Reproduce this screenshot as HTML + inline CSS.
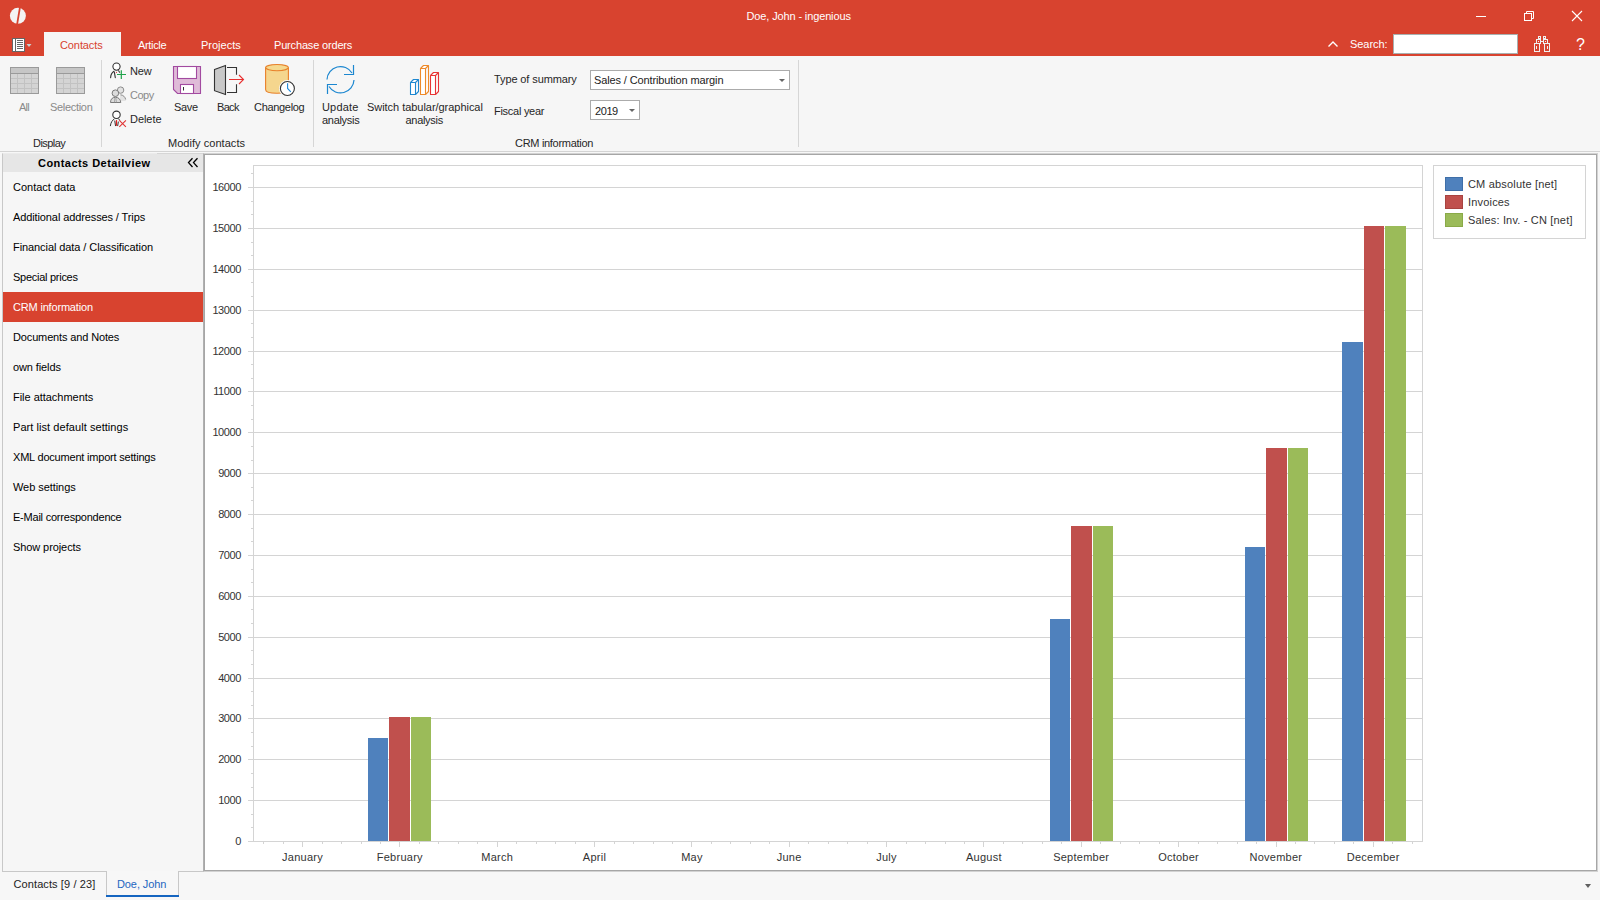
<!DOCTYPE html>
<html><head><meta charset="utf-8">
<style>
*{margin:0;padding:0;box-sizing:border-box}
html,body{width:1600px;height:900px;overflow:hidden;background:#F7F7F7;font-family:"Liberation Sans",sans-serif;font-size:11px;color:#333}
.a{position:absolute;white-space:nowrap;line-height:13px;letter-spacing:-0.1px}
#title{position:absolute;left:0;top:0;width:1600px;height:56px;background:#D8432F}
.w{color:#fff}
#ribbon{position:absolute;left:0;top:56px;width:1600px;height:95px;background:#F6F6F6}
.sep{position:absolute;width:1px;background:#D6D6D6}
.g{color:#8A8A8A}
.d{color:#262626}
.yl{left:199px;width:42px;text-align:right;color:#333;letter-spacing:-0.4px}
.xl{width:120px;text-align:center;color:#333;letter-spacing:0.25px}
.cl{color:#333;letter-spacing:0.18px}
</style></head><body>
<div id="title">
  <!-- logo -->
  <svg class="a" style="left:9px;top:7px" width="18" height="18" viewBox="0 0 18 18">
    <circle cx="8.9" cy="8.85" r="8" fill="#F4F4F4"/>
    <path d="M10.1 0 L11.9 0 L8.9 18 L7.1 18 Z" fill="#D8432F"/>
  </svg>
  <div class="a w" style="left:746.5px;top:10px;letter-spacing:-0.13px">Doe, John - ingenious</div>
  <!-- window buttons -->
  <div class="a" style="left:1476px;top:16px;width:10px;height:1px;background:#fff"></div>
  <svg class="a" style="left:1523px;top:10px" width="12" height="12" viewBox="0 0 12 12">
    <rect x="1.5" y="3.5" width="7" height="7" fill="none" stroke="#fff"/>
    <path d="M3.5 3.5 V1.5 H10.5 V8.5 H8.5" fill="none" stroke="#fff"/>
  </svg>
  <svg class="a" style="left:1571px;top:10px" width="12" height="12" viewBox="0 0 12 12">
    <path d="M1 1 L11 11 M11 1 L1 11" stroke="#fff" stroke-width="1.1"/>
  </svg>
  <!-- app menu -->
  <svg class="a" style="left:12px;top:38px" width="22" height="15" viewBox="0 0 22 15">
    <rect x="0.5" y="0.5" width="12" height="13" fill="#fff" stroke="#666"/>
    <rect x="0.5" y="0.5" width="3" height="13" fill="#fff" stroke="#666"/>
    <path d="M5 2.5H11M5 4.5H11M5 6.5H11M5 8.5H11M5 10.5H11" stroke="#666"/>
    <path d="M14.5 6 L19.5 6 L17 9 Z" fill="#C8D0D0"/>
  </svg>
  <!-- tabs -->
  <div class="a" style="left:44px;top:32px;width:77px;height:24px;background:#F6F6F6"></div>
  <div class="a" style="left:60px;top:39px;color:#D8432F;letter-spacing:-0.1px">Contacts</div>
  <div class="a w" style="left:138px;top:39px;letter-spacing:-0.33px">Article</div>
  <div class="a w" style="left:201px;top:39px;letter-spacing:0px">Projects</div>
  <div class="a w" style="left:274px;top:39px;letter-spacing:-0.17px">Purchase orders</div>
  <!-- search -->
  <svg class="a" style="left:1327px;top:40px" width="12" height="9" viewBox="0 0 12 9">
    <path d="M1.5 6.5 L6 2 L10.5 6.5" fill="none" stroke="#fff" stroke-width="1.4"/>
  </svg>
  <div class="a w" style="left:1350px;top:38px;letter-spacing:-0.05px">Search:</div>
  <div class="a" style="left:1393px;top:34px;width:125px;height:20px;background:#fff;border:1px solid #A8B0B0"></div>
  <svg class="a" style="left:1533px;top:35px" width="18" height="18" viewBox="0 0 18 18" shape-rendering="crispEdges">
    <path d="M5.5 1.5H7.5V3.5H5.5Z M3.5 4.5H7.5V8.5H3.5Z M1.5 8.5H6.5V16.5H1.5Z M10.5 1.5H12.5V3.5H10.5Z M10.5 4.5H14.5V8.5H10.5Z M11.5 8.5H16.5V16.5H11.5Z" fill="none" stroke="#F0F0F0"/>
    <path d="M7.5 6.5H10.5 M5.5 6V7 M12.5 6V7 M3.5 11V14 M14.5 11V14" stroke="#F0F0F0"/>
  </svg>
  <div class="a w" style="left:1576px;top:36px;font-size:16px;line-height:18px">?</div>
</div>

<div id="ribbon"></div>
<div class="a" style="left:0;top:151px;width:1600px;height:1px;background:#D4D4D4"></div>
<!-- Display group -->
<svg class="a" style="left:10px;top:67px" width="30" height="28" viewBox="0 0 30 28">
  <rect x="0.5" y="0.5" width="28" height="26" fill="#D4D4D4" stroke="#9A9A9A"/>
  <rect x="1" y="1" width="27" height="5" fill="#C6C6C6"/>
  <path d="M1 6.5H28" stroke="#9A9A9A"/>
  <path d="M1 11.5H28M1 16.5H28M1 21.5H28M7.5 7V26M14.5 7V26M21.5 7V26" stroke="#C2C2C2"/>
</svg>
<svg class="a" style="left:56px;top:67px" width="30" height="28" viewBox="0 0 30 28">
  <rect x="0.5" y="0.5" width="28" height="26" fill="#D4D4D4" stroke="#9A9A9A"/>
  <rect x="1" y="1" width="27" height="5" fill="#C6C6C6"/>
  <path d="M1 6.5H28" stroke="#9A9A9A"/>
  <path d="M1 11.5H28M1 16.5H28M1 21.5H28M7.5 7V26M14.5 7V26M21.5 7V26" stroke="#C2C2C2"/>
</svg>
<div class="a g" style="left:19px;top:101px;letter-spacing:-0.75px">All</div>
<div class="a g" style="left:50px;top:101px;letter-spacing:-0.31px">Selection</div>
<div class="a d" style="left:33px;top:137px;letter-spacing:-0.55px">Display</div>
<div class="sep" style="left:101px;top:60px;height:87px"></div>
<!-- Modify contacts -->
<svg class="a" style="left:109px;top:62px" width="18" height="18" viewBox="0 0 18 18">
  <circle cx="7.5" cy="4.6" r="3.6" fill="#fff" stroke="#333" stroke-width="1.1"/>
  <path d="M1.6 15.6 C1.8 12.5 3 10.5 5 9.3 M5.4 10.3 L6.3 15.6 M9.6 8.8 L10.6 10.2" fill="none" stroke="#333" stroke-width="1.1" stroke-linecap="round"/>
  <circle cx="7.5" cy="10.3" r="0.6" fill="#E03030"/>
  <path d="M12.3 8.2V17M8 12.5H17" stroke="#1FA24A" stroke-width="1.2"/>
</svg>
<svg class="a" style="left:109px;top:86px" width="18" height="18" viewBox="0 0 18 18">
  <path d="M11 8.5 C14 8.5 16.3 10.5 16.7 13.5 L16.7 15 H11 Z" fill="#E2E2E2"/>
  <path d="M11.5 8.8 C14.2 9 16.2 11 16.7 13.5" fill="none" stroke="#8C8C8C"/>
  <circle cx="11.6" cy="4.1" r="3.2" fill="#E2E2E2" stroke="#8C8C8C"/>
  <circle cx="6.4" cy="7.2" r="3.3" fill="#DCDCDC" stroke="#7A7A7A"/>
  <path d="M1.5 16.5 C1.5 13 3.5 11.3 6.4 11.3 C9.3 11.3 11.5 13 11.8 16.5 Z" fill="#DCDCDC" stroke="#7A7A7A"/>
  <path d="M5.9 12 L5.4 16.3 M6.9 12 L7.4 16.3" stroke="#9A9A9A" stroke-width="0.8"/>
</svg>
<svg class="a" style="left:109px;top:110px" width="18" height="18" viewBox="0 0 18 18">
  <circle cx="7.5" cy="4.8" r="3.7" fill="#fff" stroke="#333" stroke-width="1.1"/>
  <path d="M1.4 15.7 C1.8 12.5 3.2 10.3 5 9.2 M5.8 11 L6.5 15.7 M9.3 12 L8.7 15.7 M9.8 9 L10.6 10.2" fill="none" stroke="#333" stroke-width="1" stroke-linecap="round"/>
  <path d="M7.5 10.1 V15.8" stroke="#E02020" stroke-width="1.2"/>
  <path d="M10.3 10.4 L16.9 16.8 M16.9 10.4 L10.3 16.8" stroke="#E03535" stroke-width="1.1"/>
</svg>
<div class="a d" style="left:130px;top:65px;letter-spacing:-0.15px">New</div>
<div class="a g" style="left:130px;top:89px;letter-spacing:-0.5px">Copy</div>
<div class="a d" style="left:130px;top:113px;letter-spacing:-0.06px">Delete</div>
<!-- Save -->
<svg class="a" style="left:172px;top:65px" width="30" height="30" viewBox="0 0 30 30">
  <path d="M1.5 1.5 H28.5 V28.5 H5.5 L1.5 24.5 Z" fill="#DFBBD8" stroke="#A24AA0" stroke-width="1.1"/>
  <rect x="5.5" y="1.5" width="19" height="12" fill="#fff" stroke="#A24AA0" stroke-width="1.1"/>
  <rect x="8.5" y="19.5" width="13" height="9" fill="#fff" stroke="#A24AA0" stroke-width="1.1"/>
  <path d="M11.5 22V25.5" stroke="#333"/>
</svg>
<!-- Back -->
<svg class="a" style="left:213px;top:64px" width="32" height="32" viewBox="0 0 32 32">
  <path d="M1.5 5.4 L12.5 1.5 V30.5 L1.5 26.7 Z" fill="#C8C8C8" stroke="#333" stroke-width="1.1"/>
  <path d="M14 3.5 H23.5 V10.7 M23.5 20.2 V28.5 H14" fill="none" stroke="#333" stroke-width="1.1"/>
  <path d="M16 15.5 H30.5 M26 11 L30.5 15.5 L26 20" fill="none" stroke="#E83030" stroke-width="1.1"/>
</svg>
<!-- Changelog -->
<svg class="a" style="left:264px;top:63px" width="34" height="34" viewBox="0 0 34 34">
  <path d="M1.6 4.6 V26.5 C1.6 28.8 6.5 30.3 13 30.3 C19.5 30.3 24.4 28.8 24.4 26.5 V4.6" fill="#F5D68E" stroke="#E8802A" stroke-width="1.1"/>
  <ellipse cx="13" cy="4.6" rx="11.4" ry="3.1" fill="#F5D98F" stroke="#E8802A" stroke-width="1.1"/>
  <circle cx="23.4" cy="25.5" r="8.4" fill="#F8F8F8"/>
  <circle cx="23.4" cy="25.5" r="7" fill="#fff" stroke="#333" stroke-width="1.1"/>
  <path d="M23.6 20.2 V25.5 L26.8 28.8" fill="none" stroke="#1E88D8" stroke-width="1.1"/>
</svg>
<div class="a d" style="left:174px;top:101px;letter-spacing:-0.33px">Save</div>
<div class="a d" style="left:217px;top:101px;letter-spacing:-0.67px">Back</div>
<div class="a d" style="left:254px;top:101px;letter-spacing:-0.31px">Changelog</div>
<div class="a d" style="left:168px;top:137px;letter-spacing:0.04px">Modify contacts</div>
<div class="sep" style="left:313px;top:60px;height:87px"></div>
<!-- Update analysis -->
<svg class="a" style="left:324px;top:63px" width="34" height="34" viewBox="0 0 34 34">
  <path d="M3 16.5 A13.5 13.5 0 0 1 28 10" fill="none" stroke="#1C87D0" stroke-width="1.2"/>
  <path d="M29.5 2 V11.5 H20" fill="none" stroke="#1C87D0" stroke-width="1.2"/>
  <path d="M30 17 A13.5 13.5 0 0 1 5 23.5" fill="none" stroke="#1C87D0" stroke-width="1.2"/>
  <path d="M3.5 31 V21.5 H13" fill="none" stroke="#1C87D0" stroke-width="1.2"/>
</svg>
<!-- Switch -->
<svg class="a" style="left:408px;top:63px" width="34" height="34" viewBox="0 0 34 34">
  <path d="M2.5 19.5 H7.5 V31.5 H2.5 Z M2.5 19.5 L5.5 16.5 H10.5 L7.5 19.5 M10.5 16.5 V28.5 L7.5 31.5" fill="#fff" stroke="#1C87D0" stroke-width="1.1" stroke-linejoin="round"/>
  <path d="M12.5 5.5 H17.5 V31.5 H12.5 Z M12.5 5.5 L15.5 2.5 H20.5 L17.5 5.5 M20.5 2.5 V28.5 L17.5 31.5" fill="#fff" stroke="#EE8A2A" stroke-width="1.1" stroke-linejoin="round"/>
  <path d="M22.5 12.5 H27.5 V31.5 H22.5 Z M22.5 12.5 L25.5 9.5 H30.5 L27.5 12.5 M30.5 9.5 V28.5 L27.5 31.5" fill="#fff" stroke="#E83535" stroke-width="1.1" stroke-linejoin="round"/>
</svg>
<div class="a d" style="left:322px;top:101px;letter-spacing:0.18px">Update</div>
<div class="a d" style="left:322px;top:114px;letter-spacing:-0.3px">analysis</div>
<div class="a d" style="left:367px;top:101px;letter-spacing:-0.04px">Switch tabular/graphical</div>
<div class="a d" style="left:405.5px;top:114px;letter-spacing:-0.3px">analysis</div>
<div class="a d" style="left:494px;top:73px;letter-spacing:-0.11px">Type of summary</div>
<div class="a" style="left:590px;top:70px;width:200px;height:20px;background:#fff;border:1px solid #ABABAB"></div>
<div class="a" style="left:594px;top:74px;color:#222;letter-spacing:-0.12px">Sales / Contribution margin</div>
<div class="a" style="left:779px;top:79px;width:0;height:0;border-left:3px solid transparent;border-right:3px solid transparent;border-top:3px solid #666"></div>
<div class="a d" style="left:494px;top:105px;letter-spacing:-0.27px">Fiscal year</div>
<div class="a" style="left:590px;top:100px;width:50px;height:20px;background:#fff;border:1px solid #ABABAB"></div>
<div class="a" style="left:595px;top:105px;color:#222;letter-spacing:-0.43px">2019</div>
<div class="a" style="left:629px;top:109px;width:0;height:0;border-left:3px solid transparent;border-right:3px solid transparent;border-top:3px solid #666"></div>
<div class="a d" style="left:515px;top:137px;letter-spacing:-0.3px">CRM information</div>
<div class="sep" style="left:798px;top:60px;height:87px"></div>
<!--NAV-->
<div class="a" style="left:2px;top:153px;width:202px;height:719px;border:1px solid #C8C8C8;border-top-color:#EBEBEB;border-right:none;background:#F6F6F6"></div>
<div class="a" style="left:157px;top:153px;width:46px;height:1px;background:#D6D6D6"></div>
<div class="a" style="left:3px;top:154px;width:200px;height:18px;background:#E6E6E6"></div>
<div class="a" style="left:38px;top:157px;font-weight:bold;color:#000;letter-spacing:0.45px">Contacts Detailview</div>
<svg class="a" style="left:187px;top:157px" width="12" height="11" viewBox="0 0 12 11"><path d="M5.5 1.2 L1.5 5.6 L5.5 10 M10.5 1.2 L6.5 5.6 L10.5 10" fill="none" stroke="#000" stroke-width="1.3"/></svg>
<div class="a" style="left:3px;top:292px;width:200px;height:30px;background:#D8432F"></div>
<div class="a" style="left:13px;top:181px;color:#000;letter-spacing:0px">Contact data</div>
<div class="a" style="left:13px;top:211px;color:#000;letter-spacing:-0.11px">Additional addresses / Trips</div>
<div class="a" style="left:13px;top:241px;color:#000;letter-spacing:-0.08px">Financial data / Classification</div>
<div class="a" style="left:13px;top:271px;color:#000;letter-spacing:-0.27px">Special prices</div>
<div class="a" style="left:13px;top:301px;color:#fff;letter-spacing:-0.18px">CRM information</div>
<div class="a" style="left:13px;top:331px;color:#000;letter-spacing:-0.14px">Documents and Notes</div>
<div class="a" style="left:13px;top:361px;color:#000;letter-spacing:-0.11px">own fields</div>
<div class="a" style="left:13px;top:391px;color:#000;letter-spacing:-0.03px">File attachments</div>
<div class="a" style="left:13px;top:421px;color:#000;letter-spacing:0.06px">Part list default settings</div>
<div class="a" style="left:13px;top:451px;color:#000;letter-spacing:-0.2px">XML document import settings</div>
<div class="a" style="left:13px;top:481px;color:#000;letter-spacing:-0.06px">Web settings</div>
<div class="a" style="left:13px;top:511px;color:#000;letter-spacing:-0.22px">E-Mail correspondence</div>
<div class="a" style="left:13px;top:541px;color:#000;letter-spacing:-0.09px">Show projects</div>
<div class="a" style="left:203px;top:153px;width:1395px;height:719px;background:#fff;border:1px solid #D2D2D2;border-left-color:#B0B0B0"><div style="position:absolute;left:0;top:0;right:0;bottom:0;border:1px solid #A6A6A6"></div></div>
<svg class="a" style="left:0;top:0" width="1600" height="900" viewBox="0 0 1600 900">


















































<rect x="248" y="841" width="1175" height="1" fill="#D4D4D4"/><rect x="251" y="827" width="2" height="1" fill="#D4D4D4"/><rect x="251" y="814" width="2" height="1" fill="#D4D4D4"/><rect x="248" y="800" width="1175" height="1" fill="#D4D4D4"/><rect x="251" y="787" width="2" height="1" fill="#D4D4D4"/><rect x="251" y="773" width="2" height="1" fill="#D4D4D4"/><rect x="248" y="759" width="1175" height="1" fill="#D4D4D4"/><rect x="251" y="746" width="2" height="1" fill="#D4D4D4"/><rect x="251" y="732" width="2" height="1" fill="#D4D4D4"/><rect x="248" y="718" width="1175" height="1" fill="#D4D4D4"/><rect x="251" y="705" width="2" height="1" fill="#D4D4D4"/><rect x="251" y="691" width="2" height="1" fill="#D4D4D4"/><rect x="248" y="678" width="1175" height="1" fill="#D4D4D4"/><rect x="251" y="664" width="2" height="1" fill="#D4D4D4"/><rect x="251" y="650" width="2" height="1" fill="#D4D4D4"/><rect x="248" y="637" width="1175" height="1" fill="#D4D4D4"/><rect x="251" y="623" width="2" height="1" fill="#D4D4D4"/><rect x="251" y="609" width="2" height="1" fill="#D4D4D4"/><rect x="248" y="596" width="1175" height="1" fill="#D4D4D4"/><rect x="251" y="582" width="2" height="1" fill="#D4D4D4"/><rect x="251" y="569" width="2" height="1" fill="#D4D4D4"/><rect x="248" y="555" width="1175" height="1" fill="#D4D4D4"/><rect x="251" y="541" width="2" height="1" fill="#D4D4D4"/><rect x="251" y="528" width="2" height="1" fill="#D4D4D4"/><rect x="248" y="514" width="1175" height="1" fill="#D4D4D4"/><rect x="251" y="500" width="2" height="1" fill="#D4D4D4"/><rect x="251" y="487" width="2" height="1" fill="#D4D4D4"/><rect x="248" y="473" width="1175" height="1" fill="#D4D4D4"/><rect x="251" y="460" width="2" height="1" fill="#D4D4D4"/><rect x="251" y="446" width="2" height="1" fill="#D4D4D4"/><rect x="248" y="432" width="1175" height="1" fill="#D4D4D4"/><rect x="251" y="419" width="2" height="1" fill="#D4D4D4"/><rect x="251" y="405" width="2" height="1" fill="#D4D4D4"/><rect x="248" y="391" width="1175" height="1" fill="#D4D4D4"/><rect x="251" y="378" width="2" height="1" fill="#D4D4D4"/><rect x="251" y="364" width="2" height="1" fill="#D4D4D4"/><rect x="248" y="351" width="1175" height="1" fill="#D4D4D4"/><rect x="251" y="337" width="2" height="1" fill="#D4D4D4"/><rect x="251" y="323" width="2" height="1" fill="#D4D4D4"/><rect x="248" y="310" width="1175" height="1" fill="#D4D4D4"/><rect x="251" y="296" width="2" height="1" fill="#D4D4D4"/><rect x="251" y="282" width="2" height="1" fill="#D4D4D4"/><rect x="248" y="269" width="1175" height="1" fill="#D4D4D4"/><rect x="251" y="255" width="2" height="1" fill="#D4D4D4"/><rect x="251" y="242" width="2" height="1" fill="#D4D4D4"/><rect x="248" y="228" width="1175" height="1" fill="#D4D4D4"/><rect x="251" y="214" width="2" height="1" fill="#D4D4D4"/><rect x="251" y="201" width="2" height="1" fill="#D4D4D4"/><rect x="248" y="187" width="1175" height="1" fill="#D4D4D4"/><rect x="251" y="173" width="2" height="1" fill="#D4D4D4"/><rect x="253" y="165" width="1170" height="1" fill="#D4D4D4"/>
<rect x="253" y="165" width="1" height="677" fill="#D4D4D4"/>
<rect x="1422" y="165" width="1" height="677" fill="#D4D4D4"/><rect x="263" y="842" width="1" height="2" fill="#D4D4D4"/><rect x="283" y="842" width="1" height="2" fill="#D4D4D4"/><rect x="302" y="842" width="1" height="5" fill="#D4D4D4"/><rect x="322" y="842" width="1" height="2" fill="#D4D4D4"/><rect x="341" y="842" width="1" height="2" fill="#D4D4D4"/><rect x="361" y="842" width="1" height="2" fill="#D4D4D4"/><rect x="380" y="842" width="1" height="2" fill="#D4D4D4"/><rect x="399" y="842" width="1" height="5" fill="#D4D4D4"/><rect x="419" y="842" width="1" height="2" fill="#D4D4D4"/><rect x="438" y="842" width="1" height="2" fill="#D4D4D4"/><rect x="458" y="842" width="1" height="2" fill="#D4D4D4"/><rect x="477" y="842" width="1" height="2" fill="#D4D4D4"/><rect x="497" y="842" width="1" height="5" fill="#D4D4D4"/><rect x="516" y="842" width="1" height="2" fill="#D4D4D4"/><rect x="536" y="842" width="1" height="2" fill="#D4D4D4"/><rect x="555" y="842" width="1" height="2" fill="#D4D4D4"/><rect x="575" y="842" width="1" height="2" fill="#D4D4D4"/><rect x="594" y="842" width="1" height="5" fill="#D4D4D4"/><rect x="614" y="842" width="1" height="2" fill="#D4D4D4"/><rect x="633" y="842" width="1" height="2" fill="#D4D4D4"/><rect x="653" y="842" width="1" height="2" fill="#D4D4D4"/><rect x="672" y="842" width="1" height="2" fill="#D4D4D4"/><rect x="691" y="842" width="1" height="5" fill="#D4D4D4"/><rect x="711" y="842" width="1" height="2" fill="#D4D4D4"/><rect x="730" y="842" width="1" height="2" fill="#D4D4D4"/><rect x="750" y="842" width="1" height="2" fill="#D4D4D4"/><rect x="769" y="842" width="1" height="2" fill="#D4D4D4"/><rect x="789" y="842" width="1" height="5" fill="#D4D4D4"/><rect x="808" y="842" width="1" height="2" fill="#D4D4D4"/><rect x="828" y="842" width="1" height="2" fill="#D4D4D4"/><rect x="847" y="842" width="1" height="2" fill="#D4D4D4"/><rect x="867" y="842" width="1" height="2" fill="#D4D4D4"/><rect x="886" y="842" width="1" height="5" fill="#D4D4D4"/><rect x="906" y="842" width="1" height="2" fill="#D4D4D4"/><rect x="925" y="842" width="1" height="2" fill="#D4D4D4"/><rect x="945" y="842" width="1" height="2" fill="#D4D4D4"/><rect x="964" y="842" width="1" height="2" fill="#D4D4D4"/><rect x="983" y="842" width="1" height="5" fill="#D4D4D4"/><rect x="1003" y="842" width="1" height="2" fill="#D4D4D4"/><rect x="1022" y="842" width="1" height="2" fill="#D4D4D4"/><rect x="1042" y="842" width="1" height="2" fill="#D4D4D4"/><rect x="1061" y="842" width="1" height="2" fill="#D4D4D4"/><rect x="1081" y="842" width="1" height="5" fill="#D4D4D4"/><rect x="1100" y="842" width="1" height="2" fill="#D4D4D4"/><rect x="1120" y="842" width="1" height="2" fill="#D4D4D4"/><rect x="1139" y="842" width="1" height="2" fill="#D4D4D4"/><rect x="1159" y="842" width="1" height="2" fill="#D4D4D4"/><rect x="1178" y="842" width="1" height="5" fill="#D4D4D4"/><rect x="1198" y="842" width="1" height="2" fill="#D4D4D4"/><rect x="1217" y="842" width="1" height="2" fill="#D4D4D4"/><rect x="1237" y="842" width="1" height="2" fill="#D4D4D4"/><rect x="1256" y="842" width="1" height="2" fill="#D4D4D4"/><rect x="1276" y="842" width="1" height="5" fill="#D4D4D4"/><rect x="1295" y="842" width="1" height="2" fill="#D4D4D4"/><rect x="1314" y="842" width="1" height="2" fill="#D4D4D4"/><rect x="1334" y="842" width="1" height="2" fill="#D4D4D4"/><rect x="1353" y="842" width="1" height="2" fill="#D4D4D4"/><rect x="1373" y="842" width="1" height="5" fill="#D4D4D4"/><rect x="1392" y="842" width="1" height="2" fill="#D4D4D4"/><rect x="1412" y="842" width="1" height="2" fill="#D4D4D4"/>




























































<rect x="368" y="738" width="20" height="103" fill="#4F81BD"/>
<rect x="389" y="717" width="21" height="124" fill="#C0504D"/>
<rect x="411" y="717" width="20" height="124" fill="#9BBB59"/>
<rect x="1050" y="619" width="20" height="222" fill="#4F81BD"/>
<rect x="1071" y="526" width="21" height="315" fill="#C0504D"/>
<rect x="1093" y="526" width="20" height="315" fill="#9BBB59"/>
<rect x="1245" y="547" width="20" height="294" fill="#4F81BD"/>
<rect x="1266" y="448" width="21" height="393" fill="#C0504D"/>
<rect x="1288" y="448" width="20" height="393" fill="#9BBB59"/>
<rect x="1342" y="342" width="21" height="499" fill="#4F81BD"/>
<rect x="1364" y="226" width="20" height="615" fill="#C0504D"/>
<rect x="1385" y="226" width="21" height="615" fill="#9BBB59"/>
</svg>
<div class="a yl" style="top:835px">0</div>
<div class="a yl" style="top:794px">1000</div>
<div class="a yl" style="top:753px">2000</div>
<div class="a yl" style="top:712px">3000</div>
<div class="a yl" style="top:672px">4000</div>
<div class="a yl" style="top:631px">5000</div>
<div class="a yl" style="top:590px">6000</div>
<div class="a yl" style="top:549px">7000</div>
<div class="a yl" style="top:508px">8000</div>
<div class="a yl" style="top:467px">9000</div>
<div class="a yl" style="top:426px">10000</div>
<div class="a yl" style="top:385px">11000</div>
<div class="a yl" style="top:345px">12000</div>
<div class="a yl" style="top:304px">13000</div>
<div class="a yl" style="top:263px">14000</div>
<div class="a yl" style="top:222px">15000</div>
<div class="a yl" style="top:181px">16000</div>
<div class="a xl" style="left:242.5px;top:851px">January</div>
<div class="a xl" style="left:339.8px;top:851px">February</div>
<div class="a xl" style="left:437.2px;top:851px">March</div>
<div class="a xl" style="left:534.5px;top:851px">April</div>
<div class="a xl" style="left:631.9px;top:851px">May</div>
<div class="a xl" style="left:729.2px;top:851px">June</div>
<div class="a xl" style="left:826.5px;top:851px">July</div>
<div class="a xl" style="left:923.9px;top:851px">August</div>
<div class="a xl" style="left:1021.2px;top:851px">September</div>
<div class="a xl" style="left:1118.6px;top:851px">October</div>
<div class="a xl" style="left:1215.9px;top:851px">November</div>
<div class="a xl" style="left:1313.2px;top:851px">December</div>
<div class="a" style="left:1433px;top:165px;width:153px;height:74px;border:1px solid #D4D4D4;background:#fff"></div>
<div class="a" style="left:1445px;top:177px;width:18px;height:14px;background:#4F81BD;border:1px solid #3F6FA8"></div>
<div class="a cl" style="left:1468px;top:178px">CM absolute [net]</div>
<div class="a" style="left:1445px;top:195px;width:18px;height:14px;background:#C0504D;border:1px solid #A84340"></div>
<div class="a cl" style="left:1468px;top:196px">Invoices</div>
<div class="a" style="left:1445px;top:213px;width:18px;height:14px;background:#9BBB59;border:1px solid #8AAA48"></div>
<div class="a cl" style="left:1468px;top:214px">Sales: Inv. - CN [net]</div>
<div class="a" style="left:106px;top:871px;width:73px;height:26px;border-left:1px solid #C8C8C8;border-right:1px solid #C8C8C8;background:#F7F7F7"></div>
<div class="a" style="left:106px;top:895px;width:73px;height:2px;background:#1565C0"></div>
<div class="a" style="left:13.5px;top:878px;color:#222;letter-spacing:0.1px">Contacts [9 / 23]</div>
<div class="a" style="left:117px;top:878px;color:#1E66C0">Doe, John</div>
<div class="a" style="left:1585px;top:884px;width:0;height:0;border-left:3.5px solid transparent;border-right:3.5px solid transparent;border-top:4px solid #606060"></div>
<!--/NAV-->
</body></html>
